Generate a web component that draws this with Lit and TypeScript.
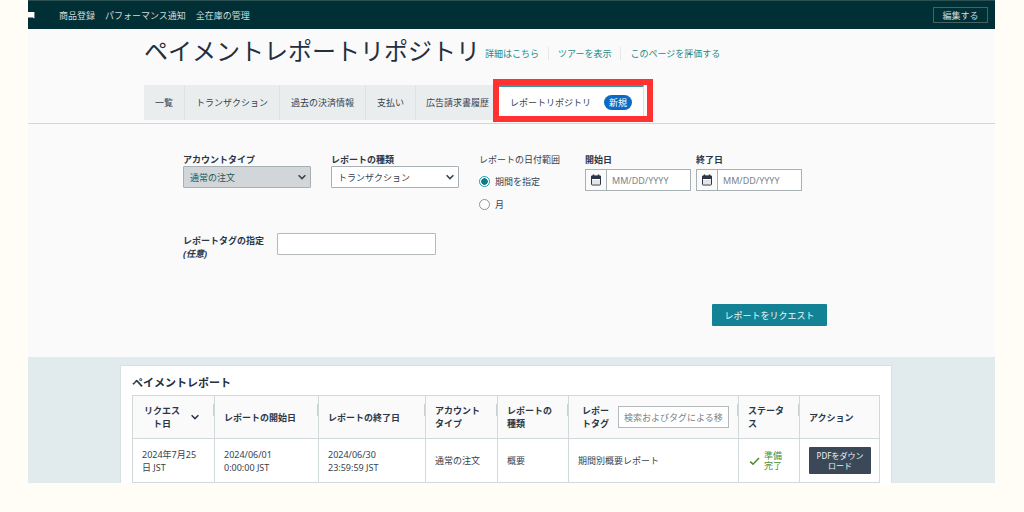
import { LitElement, html, css, svg } from "lit";
import { customElement, state } from "lit/decorators.js";
import { classMap } from "lit/directives/class-map.js";

const chevron = html`<svg class="chevron" viewBox="0 0 10 10" width="10" height="10" aria-hidden="true">
  <path d="M1.6 3.2 5 6.6 8.4 3.2" fill="none" stroke="currentColor" stroke-width="1.5" />
</svg>`;

const calendarDots = [3, 5, 7, 9].map(
  (x) => svg`<path d="M${x} 6.5v1M${x} 8.5v1" stroke="#8a939b" stroke-width="1" />`
);

const calendar = html`<svg viewBox="0 0 12 12" width="12" height="12" aria-hidden="true">
  <path d="M3.5 .5v2M8.5 .5v2" stroke="#2b3746" stroke-width="1.4" />
  <rect x="1.5" y="2" width="9" height="9" rx=".6" fill="#fff" stroke="#2b3746" />
  <path d="M1 1.8h10v3.2H1z" fill="#2b3746" />
  ${calendarDots}
</svg>`;

@customElement("app-root")
export class AppRoot extends LitElement {
  @state() private range = "period";

  private tabs = ["一覧", "トランザクション", "過去の決済情報", "支払い", "広告請求書履歴"];

  static styles = css`
    :host {
      display: block;
      min-height: 100vh;
      box-sizing: border-box;
      padding: 0 29px 0 28px;
      background: #fffdf5;
      color: #37424d;
      font: 9px/13px "Noto Sans", "Noto Sans CJK JP", sans-serif;
    }
    * { box-sizing: border-box; }
    button, input, select { font: inherit; color: inherit; margin: 0; }
    a { text-decoration: none; color: inherit; }

    .topbar {
      display: flex;
      align-items: center;
      height: 29px;
      padding-right: 7px;
      border-top: 1px solid #2c4f52;
      background: #002f36;
      color: #cfdcdc;
    }
    .flag { width: 7px; margin-right: 24px; }
    .topnav { display: flex; flex: 1; gap: 10px; }
    .edit {
      width: 55px;
      height: 16px;
      padding: 0;
      border: 1px solid #426468;
      background: none;
      line-height: 13px;
    }

    .head {
      padding: 0 116px 3px;
      background: #fafafa;
      border-bottom: 1px solid #d3d7d8;
    }
    .titlerow { display: flex; align-items: center; height: 56px; padding-bottom: 12px; }
    h1 {
      margin: 0 5px 0 0;
      font-size: 24px;
      line-height: 32px;
      font-weight: 400;
      color: #232f3e;
      white-space: nowrap;
    }
    .links { display: flex; padding-top: 5px; color: #1b8a8c; white-space: nowrap; }
    .links a + a { margin-left: 9px; padding-left: 9px; border-left: 1px solid #e4e8e8; }
    .tabs { display: flex; height: 35px; white-space: nowrap; }
    .tab {
      display: flex;
      align-items: center;
      padding: 0 11px;
      border-right: 1px solid #dde1e2;
      background: #eaedee;
    }
    .tab:nth-child(5) { border-right: 0; padding: 0 10px; }
    .tab.active {
      position: relative;
      gap: 13px;
      padding-bottom: 2px;
      background: #fff;
      border-top: 2px solid #3b93a3;
    }
    .tab.active::after {
      content: "";
      position: absolute;
      inset: -8px -10px -2px -6px;
      border: 6px solid #ff3131;
    }
    .badge {
      padding: 1px 5px;
      border-radius: 8px;
      background: #0b6bc4;
      color: #fff;
    }

    .form {
      padding: 29px 168px 31px 155px;
      background: #fafafa;
    }
    .fields { display: flex; align-items: flex-start; }
    .field { display: flex; flex-direction: column; }
    .label { font-weight: 700; color: #2b3746; }
    .w-select { width: 128px; margin-right: 20px; }
    .select { display: grid; align-items: center; }
    .select > * { grid-area: 1 / 1; }
    .select .chevron { justify-self: end; margin-right: 4px; pointer-events: none; color: #37424d; }
    select {
      appearance: none;
      width: 100%;
      height: 22px;
      padding: 0 20px 0 6px;
      border: 1px solid #a9b0b3;
      border-radius: 1px;
      background: #fff;
    }
    select.muted { background: #d3d6d9; color: #245a5a; }
    fieldset { width: 106px; margin: 0; padding: 0; border: 0; }
    legend { padding: 0; margin-bottom: 4px; }
    .radio { display: flex; align-items: center; gap: 5px; height: 23px; }
    .radio input {
      appearance: none;
      width: 11px;
      height: 11px;
      border: 1px solid #8d9699;
      border-radius: 50%;
      background: #fff;
    }
    .radio input:checked {
      border-color: #1e9ca4;
      background: radial-gradient(circle, #0a7c8c 3px, #fff 3.5px);
    }
    .date { width: 106px; margin-right: 5px; }
    .date .label { margin-bottom: 3px; }
    .group {
      display: flex;
      height: 22px;
      border: 1px solid #a9b0b3;
      background: #fff;
    }
    .group button {
      display: grid;
      place-items: center;
      width: 21px;
      padding: 0;
      border: 0;
      border-right: 1px solid #a9b0b3;
      background: #fafafa;
    }
    .group input { flex: 1; min-width: 0; padding: 0 5px; border: 0; background: none; }
    ::placeholder { color: #7b8388; opacity: 1; }
    .tagrow { display: flex; margin-top: 17px; }
    .tagrow .label { width: 94px; padding-top: 1px; }
    .tagrow input {
      width: 159px;
      height: 22px;
      padding: 0 6px;
      border: 1px solid #b4babc;
      border-radius: 1px;
      background: #fff;
    }
    .actions { display: flex; justify-content: flex-end; margin-top: 44px; }
    .request {
      width: 115px;
      height: 22px;
      padding: 0;
      border: 0;
      border-radius: 1px;
      background: #138294;
      color: #e9fafa;
    }

    .results { padding: 8px 103px 0 92px; background: #e1eaec; }
    .card { padding: 10px 11px 0; border: 1px solid #d7dfe1; border-bottom: 0; background: #fff; }
    h2 { margin: 0 0 5px; font-size: 11px; line-height: 14px; color: #232f3e; }
    table { width: 100%; table-layout: fixed; border-collapse: collapse; }
    th, td { height: 44px; padding: 0 9px; border: 1px solid #d2d9db; text-align: left; }
    th { position: relative; height: 43px; background: #fafafa; color: #2b3746; }
    th:not(:last-child)::after {
      content: "";
      position: absolute;
      top: 8px;
      right: 0;
      height: 12px;
      border-right: 1px solid #cbd2d4;
    }
    .sort { display: flex; align-items: center; gap: 8px; text-align: center; }
    .sort span { width: 40px; }
    .tagsearch { display: flex; align-items: center; gap: 7px; padding-left: 4px; }
    .tagsearch label { width: 29px; }
    .tagsearch input {
      flex: 1;
      min-width: 0;
      height: 22px;
      padding: 0 5px;
      border: 1px solid #b4babc;
      background: #fff;
      font-weight: 400;
    }
    .done { display: flex; align-items: center; gap: 4px; padding-left: 1px; line-height: 10px; color: #4f8f2f; }
    .done span { width: 18px; }
    .c-req { width: 82px; }
    .c-start { width: 104px; }
    .c-end { width: 107px; }
    .c-acct { width: 72px; }
    .c-kind { width: 71px; }
    .c-stat { width: 61px; }
    .c-act { width: 80px; }
    .pdf {
      width: 62px;
      height: 27px;
      padding: 0 6px;
      border: 0;
      border-radius: 1px;
      background: #3b4858;
      color: #eef1f3;
      font-size: 8px;
      line-height: 10px;
    }
  `;

  private radio(value: string, text: string) {
    return html`<label class="radio">
      <input type="radio" name="range" .checked=${this.range === value}
        @change=${() => (this.range = value)} />${text}
    </label>`;
  }

  private dateField(id: string, text: string) {
    return html`<div class="field date">
      <label class="label" for=${id}>${text}</label>
      <div class="group">
        <button type="button" aria-label=${text}>${calendar}</button>
        <input id=${id} type="text" placeholder="MM/DD/YYYY" />
      </div>
    </div>`;
  }

  private selectField(id: string, text: string, value: string, muted: boolean) {
    return html`<div class="field w-select">
      <label class="label" for=${id}>${text}</label>
      <div class="select">
        <select id=${id} class=${classMap({ muted })}><option>${value}</option></select>
        ${chevron}
      </div>
    </div>`;
  }

  render() {
    return html`
      <header class="topbar">
        <svg class="flag" viewBox="0 0 7 7" width="7" height="7" aria-hidden="true">
          <path d="M0 0h6.4v6.4L4.8 5.6H0z" fill="#fff" />
        </svg>
        <nav class="topnav">
          <a href="#">商品登録</a><a href="#">パフォーマンス通知</a><a href="#">全在庫の管理</a>
        </nav>
        <button class="edit" type="button">編集する</button>
      </header>
      <section class="head">
        <div class="titlerow">
          <h1>ペイメントレポートリポジトリ</h1>
          <div class="links">
            <a href="#">詳細はこちら</a><a href="#">ツアーを表示</a><a href="#">このページを評価する</a>
          </div>
        </div>
        <nav class="tabs">
          ${this.tabs.map((t) => html`<a class="tab" href="#">${t}</a>`)}
          <a class="tab active" href="#" aria-current="page">レポートリポジトリ<span class="badge">新規</span></a>
        </nav>
      </section>
      <form class="form" @submit=${(e: Event) => e.preventDefault()}>
        <div class="fields">
          ${this.selectField("account", "アカウントタイプ", "通常の注文", true)}
          ${this.selectField("kind", "レポートの種類", "トランザクション", false)}
          <fieldset>
            <legend>レポートの日付範囲</legend>
            ${this.radio("period", "期間を指定")} ${this.radio("month", "月")}
          </fieldset>
          ${this.dateField("start", "開始日")} ${this.dateField("end", "終了日")}
        </div>
        <div class="tagrow">
          <label class="label" for="tag">レポートタグの指定<br /><em>(任意)</em></label>
          <input id="tag" type="text" />
        </div>
        <div class="actions"><button class="request">レポートをリクエスト</button></div>
      </form>
      <section class="results">
        <div class="card">
          <h2>ペイメントレポート</h2>
          <table>
            <colgroup>
              <col class="c-req" /><col class="c-start" /><col class="c-end" /><col class="c-acct" />
              <col class="c-kind" /><col /><col class="c-stat" /><col class="c-act" />
            </colgroup>
            <thead>
              <tr>
                <th><div class="sort"><span>リクエスト日</span>${chevron}</div></th>
                <th>レポートの開始日</th>
                <th>レポートの終了日</th>
                <th>アカウントタイプ</th>
                <th>レポートの種類</th>
                <th>
                  <div class="tagsearch">
                    <label for="search">レポートタグ</label>
                    <input id="search" type="text" placeholder="検索およびタグによる移動" />
                  </div>
                </th>
                <th>ステータス</th>
                <th>アクション</th>
              </tr>
            </thead>
            <tbody>
              <tr>
                <td>2024年7月25日 JST</td>
                <td>2024/06/01<br />0:00:00 JST</td>
                <td>2024/06/30<br />23:59:59 JST</td>
                <td>通常の注文</td>
                <td>概要</td>
                <td>期間別概要レポート</td>
                <td>
                  <div class="done">
                    <svg viewBox="0 0 11 10" width="11" height="10" aria-hidden="true">
                      <path d="M1.2 5.6 4 8.2 10 2" fill="none" stroke="currentColor" stroke-width="1.6" />
                    </svg>
                    <span>準備完了</span>
                  </div>
                </td>
                <td><button class="pdf" type="button">PDFをダウンロード</button></td>
              </tr>
            </tbody>
          </table>
        </div>
      </section>
    `;
  }
}
